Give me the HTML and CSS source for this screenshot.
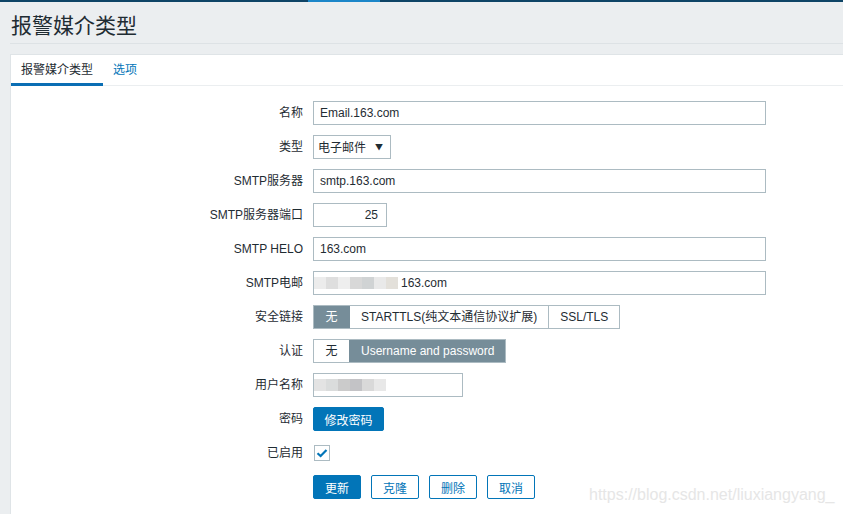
FILE: index.html
```html
<!DOCTYPE html>
<html lang="zh">
<head>
<meta charset="utf-8">
<link rel="stylesheet" href="styles.css">
</head>
<body>
<div class="topbar"><span class="topbar-seg"></span></div>
<header class="header"><h1 class="title">报警媒介类型</h1></header>
<main class="panel">
  <nav class="tabs">
    <span class="tab tab-active">报警媒介类型</span>
    <span class="tab">选项</span>
  </nav>
  <form class="form">
    <label class="lbl">名称</label>
    <div class="ctl"><div class="input w-full">Email.163.com</div></div>

    <label class="lbl">类型</label>
    <div class="ctl"><div class="select">电子邮件<span class="arrow">▼</span></div></div>

    <label class="lbl">SMTP服务器</label>
    <div class="ctl"><div class="input w-full">smtp.163.com</div></div>

    <label class="lbl">SMTP服务器端口</label>
    <div class="ctl"><div class="input w-port">25</div></div>

    <label class="lbl">SMTP HELO</label>
    <div class="ctl"><div class="input w-full">163.com</div></div>

    <label class="lbl">SMTP电邮</label>
    <div class="ctl"><div class="input w-full input-blur"><span class="blur blur-mail"><i class="b1"></i><i class="b2"></i><i class="b3"></i><i class="b4"></i><i class="b5"></i><i class="b6"></i><i class="b7"></i></span><span class="mail-tail">163.com</span></div></div>

    <label class="lbl">安全链接</label>
    <div class="ctl">
      <div class="seg">
        <span class="seg-item seg-on seg-narrow">无</span>
        <span class="seg-item">STARTTLS(纯文本通信协议扩展)</span>
        <span class="seg-item">SSL/TLS</span>
      </div>
    </div>

    <label class="lbl">认证</label>
    <div class="ctl">
      <div class="seg">
        <span class="seg-item seg-narrow">无</span>
        <span class="seg-item seg-on">Username and password</span>
      </div>
    </div>

    <label class="lbl">用户名称</label>
    <div class="ctl"><div class="input w-user input-blur"><span class="blur blur-user"><i class="u1"></i><i class="u2"></i><i class="u3"></i><i class="u4"></i><i class="u5"></i><i class="u6"></i></span></div></div>

    <label class="lbl">密码</label>
    <div class="ctl"><span class="btn btn-fill btn-pw">修改密码</span></div>

    <label class="lbl">已启用</label>
    <div class="ctl"><span class="check"><svg width="12" height="10" viewBox="0 0 12 10"><path d="M1.5 5.2 L4.6 8 L10.5 2" fill="none" stroke="#0275b8" stroke-width="2.2"/></svg></span></div>

    <span></span>
    <div class="ctl actions">
      <span class="btn btn-fill">更新</span>
      <span class="btn btn-line">克隆</span>
      <span class="btn btn-line">删除</span>
      <span class="btn btn-line">取消</span>
    </div>
  </form>
  <div class="watermark">https://blog.csdn.net/liuxiangyang_</div>
</main>
</body>
</html>
```
FILE: styles.css
```css
* { box-sizing: border-box; }
html, body { margin: 0; padding: 0; }
body {
  background: #ebeef0;
  font-family: "Liberation Sans", Arial, "Noto Sans CJK SC", sans-serif;
  font-size: 12px;
  color: #1f2c33;
  width: 843px;
  height: 514px;
  overflow: hidden;
}
.topbar {
  height: 2px;
  background: #0e4466;
  padding-left: 308px;
}
.topbar-seg {
  display: block;
  width: 72px;
  height: 2px;
  background: #1b86c9;
}
.header {
  height: 42px;
  margin-left: 10px;
  border-bottom: 1px solid #dde2e5;
  display: flex;
  align-items: center;
}
.title {
  margin: 0 0 0 1px;
  font-weight: normal;
  font-size: 21px;
  line-height: 24px;
  color: #1f2c33;
  font-family: "Noto Sans CJK SC", sans-serif;
  padding-top: 2px;
}
.panel {
  position: relative;
  margin: 10px 0 0 10px;
  background: #fff;
  border-top: 1px solid #dfe4e7;
  border-left: 1px solid #dfe4e7;
  height: 460px;
}
.tabs {
  display: flex;
  height: 31px;
  border-bottom: 1px solid #ebeef0;
}
.tab {
  padding: 0 10px;
  line-height: 28px;
  color: #0275b8;
  font-family: "Noto Sans CJK SC", sans-serif;
  font-size: 12px;
  border-bottom: 3px solid transparent;
  height: 31px;
}
.tab-active {
  color: #1f2c33;
  border-bottom-color: #0a6eb4;
  width: 92px;
}
.form {
  display: grid;
  grid-template-columns: 292px 1fr;
  column-gap: 10px;
  row-gap: 10px;
  align-items: center;
  padding-top: 15px;
}
.lbl {
  text-align: right;
  line-height: 24px;
  height: 24px;
  white-space: nowrap;
}
.ctl {
  display: flex;
  align-items: center;
  height: 24px;
}
.input {
  height: 24px;
  border: 1px solid #acbbc2;
  padding: 0 6px;
  line-height: 22px;
  background: #fff;
  white-space: nowrap;
}
.w-full { width: 453px; }
.w-port { width: 74px; text-align: right; padding-right: 8px; }
.w-user { width: 150px; }
.input-blur { position: relative; display: flex; align-items: center; padding-left: 0; }
.blur {
  display: flex;
  height: 12px;
}
.blur i { display: block; width: 12px; height: 12px; }
.b1 { background: #ececec; }
.b2 { background: #dedede; }
.b3 { background: #eeeeee; }
.b4 { background: #d8d8d8; }
.b5 { background: #d0d3d4; }
.b6 { background: #e9e9e9; }
.b7 { background: #e3e0da; }
.mail-tail { margin-left: 3px; }
.u1 { background: #e3e3e3; }
.u2 { background: #dadcdc; }
.u3 { background: #cbcbcb; }
.u4 { background: #c3c3c6; }
.u5 { background: #d9d9d9; }
.u6 { background: #e8e8e8; }
.select {
  width: 78px;
  height: 24px;
  border: 1px solid #acbbc2;
  padding: 0 4px;
  line-height: 22px;
  display: flex;
  justify-content: space-between;
  font-family: "Noto Sans CJK SC", sans-serif;
}
.arrow { font-size: 8px; padding-right: 3px; }
.seg {
  display: flex;
  height: 24px;
  border: 1px solid #acbbc2;
}
.seg-item {
  padding: 0 11px;
  line-height: 22px;
  border-left: 1px solid #acbbc2;
  white-space: nowrap;
}
.seg-item:first-child { border-left: none; }
.seg-narrow { width: 35px; padding: 0; text-align: center; }
.seg-on {
  background: #768d99;
  color: #fff;
}
.seg-on + .seg-item { border-left-color: #768d99; }
.seg-item + .seg-on { border-left-color: #768d99; }
.btn {
  display: inline-flex;
  align-items: center;
  justify-content: center;
  height: 24px;
  width: 48px;
  border-radius: 2px;
  border: 1px solid #0275b8;
  font-size: 12px;
}
.btn-fill { background: #0275b8; color: #fff; }
.btn-line { background: #fff; color: #0275b8; }
.btn-pw { width: 71px; }
.actions { gap: 10px; }
.check {
  width: 16px;
  height: 16px;
  border: 1px solid #acbbc2;
  margin-left: 1px;
  display: flex;
  align-items: center;
  justify-content: center;
}
.watermark {
  position: absolute;
  left: 578px;
  top: 431px;
  font-size: 16px;
  color: #e6e6e6;
  white-space: nowrap;
}
```
